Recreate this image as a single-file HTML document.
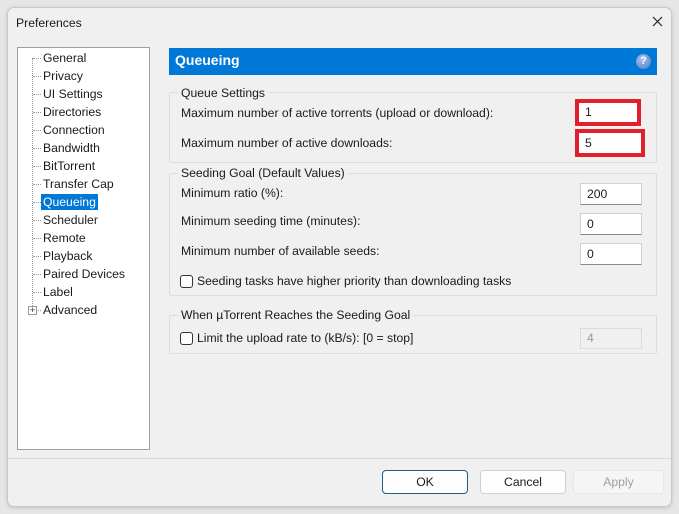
<!DOCTYPE html>
<html><head><meta charset="utf-8"><style>
*{box-sizing:border-box;margin:0;padding:0}
body{width:679px;height:514px;background:#e6e6e6;font-family:"Liberation Sans",sans-serif;font-size:12.2px;color:#1a1a1a;position:relative;overflow:hidden}
.win{position:absolute;left:7px;top:7px;width:665px;height:500px;background:#f0f0f0;border:1px solid #c8c8c8;border-radius:7px;box-shadow:0 1px 4px rgba(0,0,0,.15)}
.a{position:absolute;white-space:nowrap}
.tree{position:absolute;left:17px;top:47px;width:133px;height:403px;background:#fff;border:1px solid #a0a0a0}
.ti{position:absolute;left:23px;height:16px;line-height:16px;padding:0 2px}
.dots{position:absolute;left:14px;top:10px;width:1px;height:252px;border-left:1px dotted #999}
.h{position:absolute;left:15px;width:8px;border-top:1px dotted #999}
.grp{position:absolute;border:1px solid #dcdcdc;border-radius:2px}
.gt{position:absolute;background:#f0f0f0;padding:0 3px;color:#1a1a1a}
.inp{position:absolute;background:#fff;border:1px solid #d0d0d0;border-bottom:1px solid #888;padding-left:6px;line-height:20px}
.red{position:absolute;border:4px solid #e0202a;background:#fff;padding-left:6px}
.cb{position:absolute;width:13px;height:13px;border:1px solid #333;border-radius:3px;background:#fff}
.btn{position:absolute;top:470px;height:24px;background:#fdfdfd;border:1px solid #d0d0d0;border-radius:4px;text-align:center;line-height:22px}
</style></head><body>
<div class="win"></div>
<div class="a" style="left:16px;top:16px">Preferences</div>
<svg class="a" style="left:652px;top:16px" width="11" height="11"><path d="M1 1L10 10M10 1L1 10" stroke="#222" stroke-width="1.2"/></svg>

<div class="tree">
<div class="dots"></div>
<div class="h" style="top:10px"></div><div class="ti" style="top:2px">General</div>
<div class="h" style="top:28px"></div><div class="ti" style="top:20px">Privacy</div>
<div class="h" style="top:46px"></div><div class="ti" style="top:38px">UI Settings</div>
<div class="h" style="top:64px"></div><div class="ti" style="top:56px">Directories</div>
<div class="h" style="top:82px"></div><div class="ti" style="top:74px">Connection</div>
<div class="h" style="top:100px"></div><div class="ti" style="top:92px">Bandwidth</div>
<div class="h" style="top:118px"></div><div class="ti" style="top:110px">BitTorrent</div>
<div class="h" style="top:136px"></div><div class="ti" style="top:128px">Transfer Cap</div>
<div class="h" style="top:154px"></div><div class="ti" style="top:146px;background:#0078d7;color:#fff">Queueing</div>
<div class="h" style="top:172px"></div><div class="ti" style="top:164px">Scheduler</div>
<div class="h" style="top:190px"></div><div class="ti" style="top:182px">Remote</div>
<div class="h" style="top:208px"></div><div class="ti" style="top:200px">Playback</div>
<div class="h" style="top:226px"></div><div class="ti" style="top:218px">Paired Devices</div>
<div class="h" style="top:244px"></div><div class="ti" style="top:236px">Label</div>
<div class="h" style="top:262px"></div><div class="ti" style="top:254px">Advanced</div>
<div class="a" style="left:10px;top:258px;width:9px;height:9px;border:1px solid #999;background:#fff;font-size:9px;line-height:7px;text-align:center;color:#333">+</div>
</div>

<div class="a" style="left:169px;top:48px;width:488px;height:27px;background:#0078d7"></div>
<div class="a" style="left:175px;top:52px;color:#fff;font-weight:bold;font-size:14px">Queueing</div>
<div class="a" style="left:636px;top:54px;width:15px;height:15px;border-radius:50%;background:radial-gradient(circle at 40% 35%,#a8c4f0,#4a78c8);color:#fff;font-size:11px;font-weight:bold;text-align:center;line-height:15px">?</div>

<div class="grp" style="left:169px;top:92px;width:488px;height:71px"></div>
<div class="gt" style="left:178px;top:86px">Queue Settings</div>
<div class="a" style="left:181px;top:106px">Maximum number of active torrents (upload or download):</div>
<div class="a" style="left:181px;top:136px">Maximum number of active downloads:</div>
<div class="red" style="left:575px;top:99px;width:66px;height:27px;line-height:19px">1</div>
<div class="red" style="left:575px;top:129px;width:70px;height:28px;line-height:20px">5</div>

<div class="grp" style="left:169px;top:173px;width:488px;height:123px"></div>
<div class="gt" style="left:178px;top:166px">Seeding Goal (Default Values)</div>
<div class="a" style="left:181px;top:186px">Minimum ratio (%):</div>
<div class="a" style="left:181px;top:214px">Minimum seeding time (minutes):</div>
<div class="a" style="left:181px;top:244px">Minimum number of available seeds:</div>
<div class="inp" style="left:580px;top:183px;width:62px;height:22px">200</div>
<div class="inp" style="left:580px;top:213px;width:62px;height:22px">0</div>
<div class="inp" style="left:580px;top:243px;width:62px;height:22px">0</div>
<div class="cb" style="left:180px;top:275px"></div>
<div class="a" style="left:197px;top:274px">Seeding tasks have higher priority than downloading tasks</div>

<div class="grp" style="left:169px;top:315px;width:488px;height:39px"></div>
<div class="gt" style="left:178px;top:308px">When µTorrent Reaches the Seeding Goal</div>
<div class="cb" style="left:180px;top:332px"></div>
<div class="a" style="left:197px;top:331px">Limit the upload rate to (kB/s): [0 = stop]</div>
<div class="inp" style="left:580px;top:328px;width:62px;height:21px;background:#f0f0f0;border-color:#dadada;color:#999;line-height:19px">4</div>

<div class="a" style="left:8px;top:458px;width:663px;border-top:1px solid #d8d8d8"></div>
<div class="btn" style="left:382px;width:86px;border:1px solid #1a5f8f">OK</div>
<div class="btn" style="left:480px;width:86px">Cancel</div>
<div class="btn" style="left:573px;width:91px;background:#f5f5f5;border-color:#e6e6e6;color:#a0a0a0">Apply</div>
</body></html>
